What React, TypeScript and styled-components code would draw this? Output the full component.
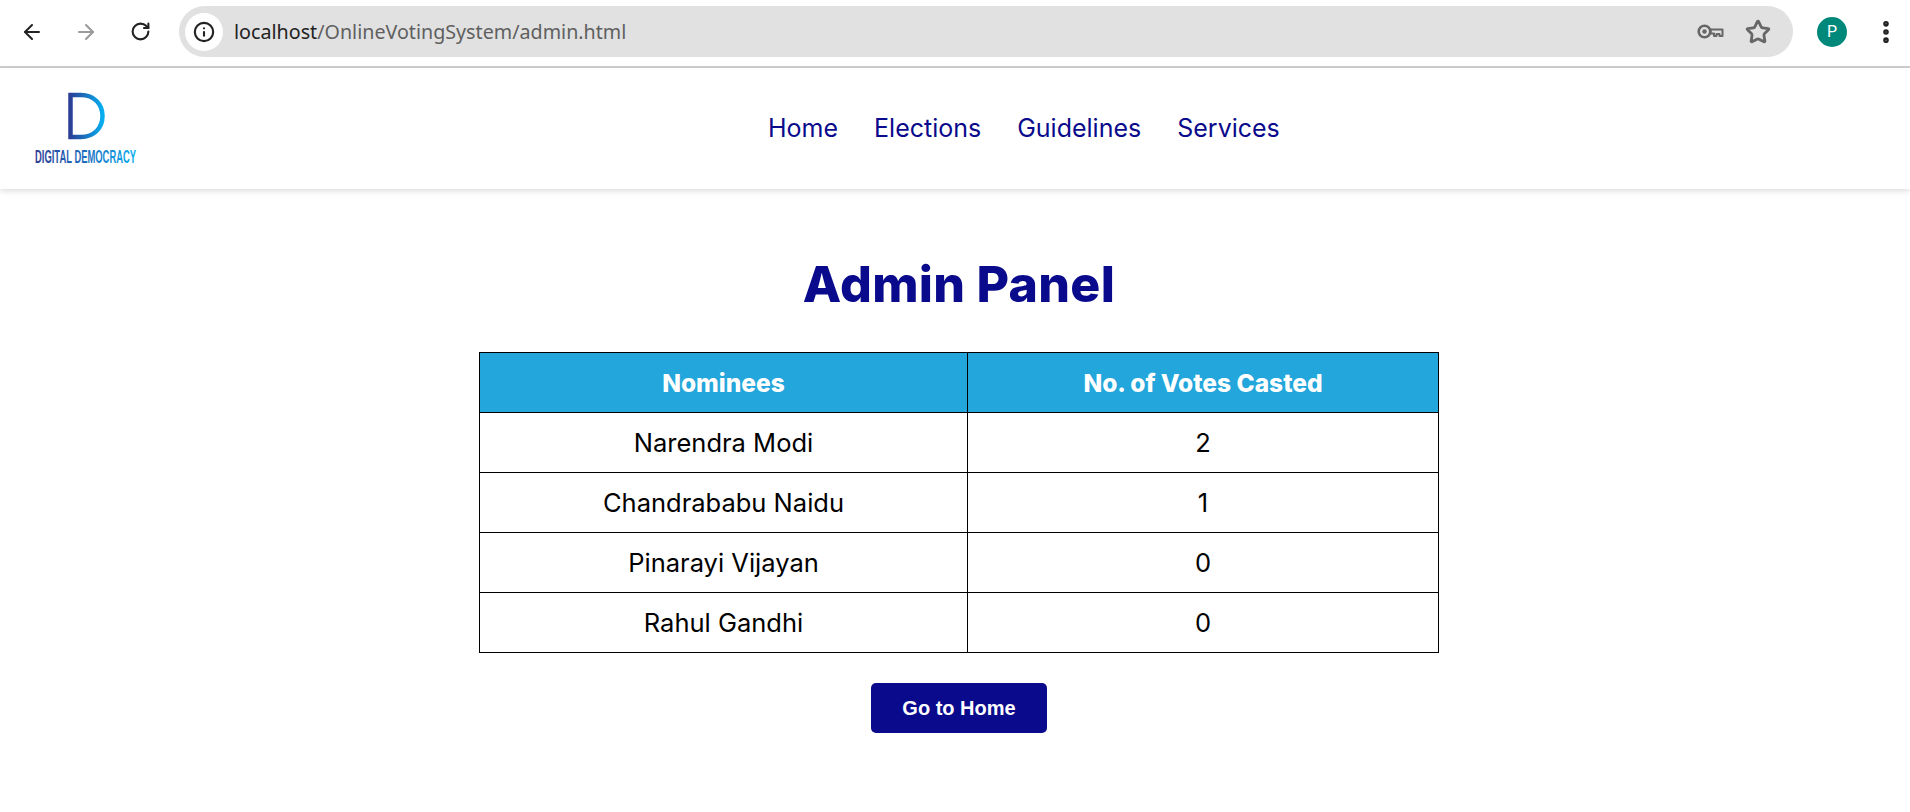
import styled, { createGlobalStyle } from 'styled-components';
import { ArrowLeft, ArrowRight, RotateCw, Info, Star, MoreVertical } from 'lucide-react';

const results = [
  { name: 'Narendra Modi', votes: 2 },
  { name: 'Chandrababu Naidu', votes: 1 },
  { name: 'Pinarayi Vijayan', votes: 0 },
  { name: 'Rahul Gandhi', votes: 0 },
];

const GlobalStyle = createGlobalStyle`
  html, body {
    margin: 0;
    padding: 0;
    background: #fff;
    font-family: Inter, "Liberation Sans", sans-serif;
  }
`;

export default function App() {
  return (
    <>
      <GlobalStyle />
      <BrowserBar>
        <NavIcon><ArrowLeft size={24} color="#222" strokeWidth={2} /></NavIcon>
        <NavIcon><ArrowRight size={24} color="#9a9a9a" strokeWidth={2} /></NavIcon>
        <NavIcon><RotateCw size={21} color="#222" strokeWidth={2.4} /></NavIcon>
        <Omnibox>
          <InfoBadge><Info size={22} color="#222" strokeWidth={2.3} /></InfoBadge>
          <Url>localhost<UrlPath>/OnlineVotingSystem/admin.html</UrlPath></Url>
          <OmniIcons>
            <svg width="27" height="15" viewBox="0 0 27 15" fill="none">
              <circle cx="7.5" cy="7.5" r="5.8" stroke="#666" strokeWidth="2.6" />
              <circle cx="7.5" cy="7.5" r="2.2" fill="#666" />
              <path d="M13.5 5.5H25.5V12H22.5V10H19.5V12H17V9.5H13.5Z" stroke="#666" strokeWidth="2" strokeLinejoin="round" />
            </svg>
            <Star size={26} color="#666" strokeWidth={2.6} />
          </OmniIcons>
        </Omnibox>
        <Avatar>P</Avatar>
        <MenuIcon><MoreVertical size={28} color="#222" strokeWidth={2.8} /></MenuIcon>
      </BrowserBar>

      <Header>
        <Logo>
          <svg width="106" height="76" viewBox="0 0 106 76">
            <defs>
              <linearGradient id="logoFill" x1="0" x2="1" y1="0" y2="0">
                <stop offset="0" stopColor="#2b3f96" />
                <stop offset="1" stopColor="#06aeef" />
              </linearGradient>
              <linearGradient id="logoText" gradientUnits="userSpaceOnUse" x1="0" x2="195" y1="0" y2="0">
                <stop offset="0" stopColor="#2b3f96" />
                <stop offset="0.5" stopColor="#1b6fc0" />
                <stop offset="1" stopColor="#06aeef" />
              </linearGradient>
            </defs>
            <path d="M36.5 3H47C60 3 68.5 12 68.5 24S60 45 47 45H36.5Z" fill="none" stroke="url(#logoFill)" strokeWidth="4.5" />
            <text transform="translate(1 71) scale(0.523 1)" fontFamily="'Liberation Sans', sans-serif" fontSize="18" fontWeight="700" fill="url(#logoText)">DIGITAL DEMOCRACY</text>
          </svg>
        </Logo>
        <Nav>
          <NavLink>Home</NavLink>
          <NavLink>Elections</NavLink>
          <NavLink>Guidelines</NavLink>
          <NavLink>Services</NavLink>
        </Nav>
      </Header>

      <Main>
        <Title>Admin Panel</Title>
        <VoteTable>
          <thead>
            <tr>
              <HeadCell $width={488}>Nominees</HeadCell>
              <HeadCell>No. of Votes Casted</HeadCell>
            </tr>
          </thead>
          <tbody>
            {results.map((row) => (
              <tr key={row.name}>
                <Cell>{row.name}</Cell>
                <Cell>{row.votes}</Cell>
              </tr>
            ))}
          </tbody>
        </VoteTable>
        <HomeButton>Go to Home</HomeButton>
      </Main>
    </>
  );
}

const BrowserBar = styled.div`
  height: 68px;
  display: flex;
  align-items: center;
  padding: 0 0 3px 20px;
  box-sizing: border-box;
  border-bottom: 2px solid #cfcfcf;
`;

const NavIcon = styled.div`
  width: 24px;
  height: 24px;
  margin-right: 30px;
  display: flex;
  align-items: center;
  justify-content: center;
`;

const Omnibox = styled.div`
  width: 1614px;
  height: 51px;
  margin-left: -3px;
  padding: 0 22px 0 6px;
  box-sizing: border-box;
  background: #e1e1e1;
  border-radius: 26px;
  display: flex;
  align-items: center;
`;

const InfoBadge = styled.div`
  width: 38px;
  height: 38px;
  border-radius: 50%;
  background: #fff;
  display: flex;
  align-items: center;
  justify-content: center;
  margin-right: 11px;
`;

const Url = styled.div`
  flex: 1;
  font-family: "Noto Sans", sans-serif;
  font-size: 19.7px;
  color: #222;
`;

const UrlPath = styled.span`
  color: #5f5f5f;
`;

const OmniIcons = styled.div`
  display: flex;
  align-items: center;
  gap: 21px;
`;

const Avatar = styled.div`
  width: 30px;
  height: 30px;
  margin-left: 24px;
  border-radius: 50%;
  background: #00897b;
  color: #fff;
  font-family: Roboto, sans-serif;
  font-size: 16px;
  display: flex;
  align-items: center;
  justify-content: center;
`;

const MenuIcon = styled.div`
  margin-left: 25px;
  display: flex;
`;

const Header = styled.header`
  height: 121px;
  padding-left: 34px;
  display: flex;
  align-items: center;
  box-shadow: 0 2px 6px rgba(0, 0, 0, 0.14);
`;

const Logo = styled.div`
  width: 106px;
  height: 76px;
  margin-top: 2px;
`;

const Nav = styled.nav`
  margin-left: 628px;
  margin-bottom: 2px;
  display: flex;
  gap: 36px;
`;

const NavLink = styled.a`
  font-size: 25px;
  color: #0a0a8c;
`;

const Main = styled.main`
  display: flex;
  flex-direction: column;
  align-items: center;
  padding-left: 8px;
`;

const Title = styled.h1`
  margin: 65px 0 38px;
  font-size: 50px;
  line-height: 60px;
  letter-spacing: 0.3px;
  font-weight: 800;
  color: #0a0a8c;
`;

const VoteTable = styled.table`
  width: 960px;
  border-collapse: collapse;
  table-layout: fixed;
`;

const HeadCell = styled.th<{ $width?: number }>`
  width: ${({ $width }) => ($width ? `${$width}px` : 'auto')};
  height: 60px;
  padding: 0;
  box-sizing: border-box;
  border: 1px solid #000;
  background: #23a6db;
  color: #fff;
  font-size: 24.5px;
  font-weight: 800;
  text-align: center;
`;

const Cell = styled.td`
  height: 60px;
  padding: 0;
  box-sizing: border-box;
  border: 1px solid #000;
  color: #000;
  font-size: 25.5px;
  text-align: center;
`;

const HomeButton = styled.button`
  width: 176px;
  height: 50px;
  margin-top: 30px;
  border: none;
  border-radius: 5px;
  background: #0a0a8c;
  color: #fff;
  font-family: "Liberation Sans", Arial, sans-serif;
  font-size: 20px;
  font-weight: 700;
`;
